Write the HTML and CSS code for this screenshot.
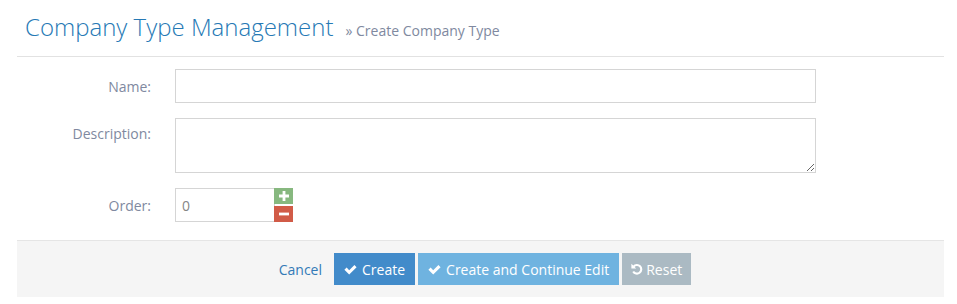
FILE: index.html
```html
<!DOCTYPE html>
<html lang="en">
<head>
    <meta charset="UTF-8">
    <meta name="viewport" content="width=device-width, initial-scale=1.0">
    <title>Company Type Management</title>
    <link rel="stylesheet" href="styles.css">
</head>
<body>
    <div class="page">
        <div class="page-header">
            <h1>Company Type Management</h1>
            <small>&raquo; Create Company Type</small>
        </div>
        <form class="form">
            <div class="form-row">
                <label class="control-label" for="name">Name:</label>
                <input type="text" id="name" class="field">
            </div>
            <div class="form-row">
                <label class="control-label label-top" for="description">Description:</label>
                <textarea id="description" class="field area"></textarea>
            </div>
            <div class="form-row">
                <label class="control-label" for="order">Order:</label>
                <div class="spinner">
                    <input type="text" id="order" class="field spinner-input" value="0">
                    <div class="spinner-buttons">
                        <button type="button" class="spin spin-up">
                            <svg width="10" height="10" viewBox="0 0 10 10"><path d="M3.6 0h2.8v3.6H10v2.8H6.4V10H3.6V6.4H0V3.6h3.6z" fill="#fff"/></svg>
                        </button>
                        <button type="button" class="spin spin-down">
                            <svg width="10" height="10" viewBox="0 0 10 10"><path d="M0 3.6h10v2.8H0z" fill="#fff"/></svg>
                        </button>
                    </div>
                </div>
            </div>
            <div class="form-actions">
                <a href="#" class="cancel">Cancel</a>
                <button type="button" class="btn btn-primary">
                    <svg class="icon" width="13" height="11" viewBox="0 0 13 11"><path d="M0.4 5.8l2.2-2.2 2.6 2.6L10.4 1l2.2 2.2-7.4 7.4z" fill="#fff"/></svg>Create
                </button>
                <button type="button" class="btn btn-info">
                    <svg class="icon" width="13" height="11" viewBox="0 0 13 11"><path d="M0.4 5.8l2.2-2.2 2.6 2.6L10.4 1l2.2 2.2-7.4 7.4z" fill="#fff"/></svg>Create and Continue Edit
                </button>
                <button type="reset" class="btn btn-grey">
                    <svg class="icon" width="12" height="12" viewBox="0 0 12 12"><path d="M2.6 3.6A4.3 4.3 0 1 1 2.2 8.4" fill="none" stroke="#fff" stroke-width="2.1"/><path d="M0.4 0.8v4.8h4.8z" fill="#fff"/></svg>Reset
                </button>
            </div>
        </form>
    </div>
</body>
</html>
```

FILE: styles.css
```css
body {
    margin: 0;
    font-family: "Open Sans", Arial, sans-serif;
    font-size: 13px;
    color: #393939;
    background: #fff;
}
.page {
    padding: 0 13px 0 17px;
}
.page-header {
    display: flex;
    align-items: baseline;
    padding: 13px 8px 15px;
    border-bottom: 1px solid #e2e2e2;
}
.page-header h1 {
    margin: 0;
    font-size: 24px;
    line-height: 28px;
    font-weight: 300;
    color: #2679b5;
}
.page-header small {
    margin-left: 12px;
    font-size: 14px;
    color: #8089a0;
}
.form {
    padding-top: 12px;
}
.form-row {
    display: flex;
    align-items: center;
    margin-bottom: 15px;
}
.control-label {
    width: 134px;
    margin-right: 24px;
    text-align: right;
    font-size: 14px;
    color: #8089a0;
}
.label-top {
    align-self: flex-start;
    padding-top: 6px;
}
.field {
    box-sizing: border-box;
    width: 641px;
    height: 34px;
    margin: 0;
    padding: 5px 6px;
    border: 1px solid #d5d5d5;
    border-radius: 0;
    font-family: inherit;
    font-size: 14px;
    color: #858585;
    background: #fff;
    outline: none;
}
.area {
    height: 55px;
    display: block;
}
.spinner {
    display: flex;
    align-items: flex-start;
}
.spinner-input {
    width: 100px;
}
.spinner-buttons {
    display: flex;
    flex-direction: column;
    gap: 2px;
    margin-left: -1px;
}
.spin {
    display: flex;
    align-items: center;
    justify-content: center;
    width: 19px;
    height: 16px;
    padding: 0;
    border: none;
    cursor: pointer;
}
.spin-up {
    background: #87b87f;
}
.spin-down {
    background: #d15b47;
}
.form-actions {
    display: flex;
    justify-content: center;
    align-items: center;
    margin-top: 18px;
    padding: 12px 0 12px 12px;
    background: #f5f5f5;
    border-top: 1px solid #e5e5e5;
}
.cancel {
    margin-right: 12px;
    font-size: 14px;
    color: #337ab7;
    text-decoration: none;
}
.btn {
    display: inline-flex;
    align-items: center;
    height: 32px;
    margin-right: 3px;
    padding: 0 10px;
    border: none;
    font-family: inherit;
    font-size: 14px;
    color: #fff;
    cursor: pointer;
}
.btn .icon {
    margin-right: 5px;
}
.btn-primary {
    background: #428bca;
}
.btn-info {
    background: #6fb3e0;
}
.btn-grey {
    background: #abbac3;
    padding: 0 9px 0 9px;
}
.btn-grey .icon {
    margin-right: 3px;
}
```
